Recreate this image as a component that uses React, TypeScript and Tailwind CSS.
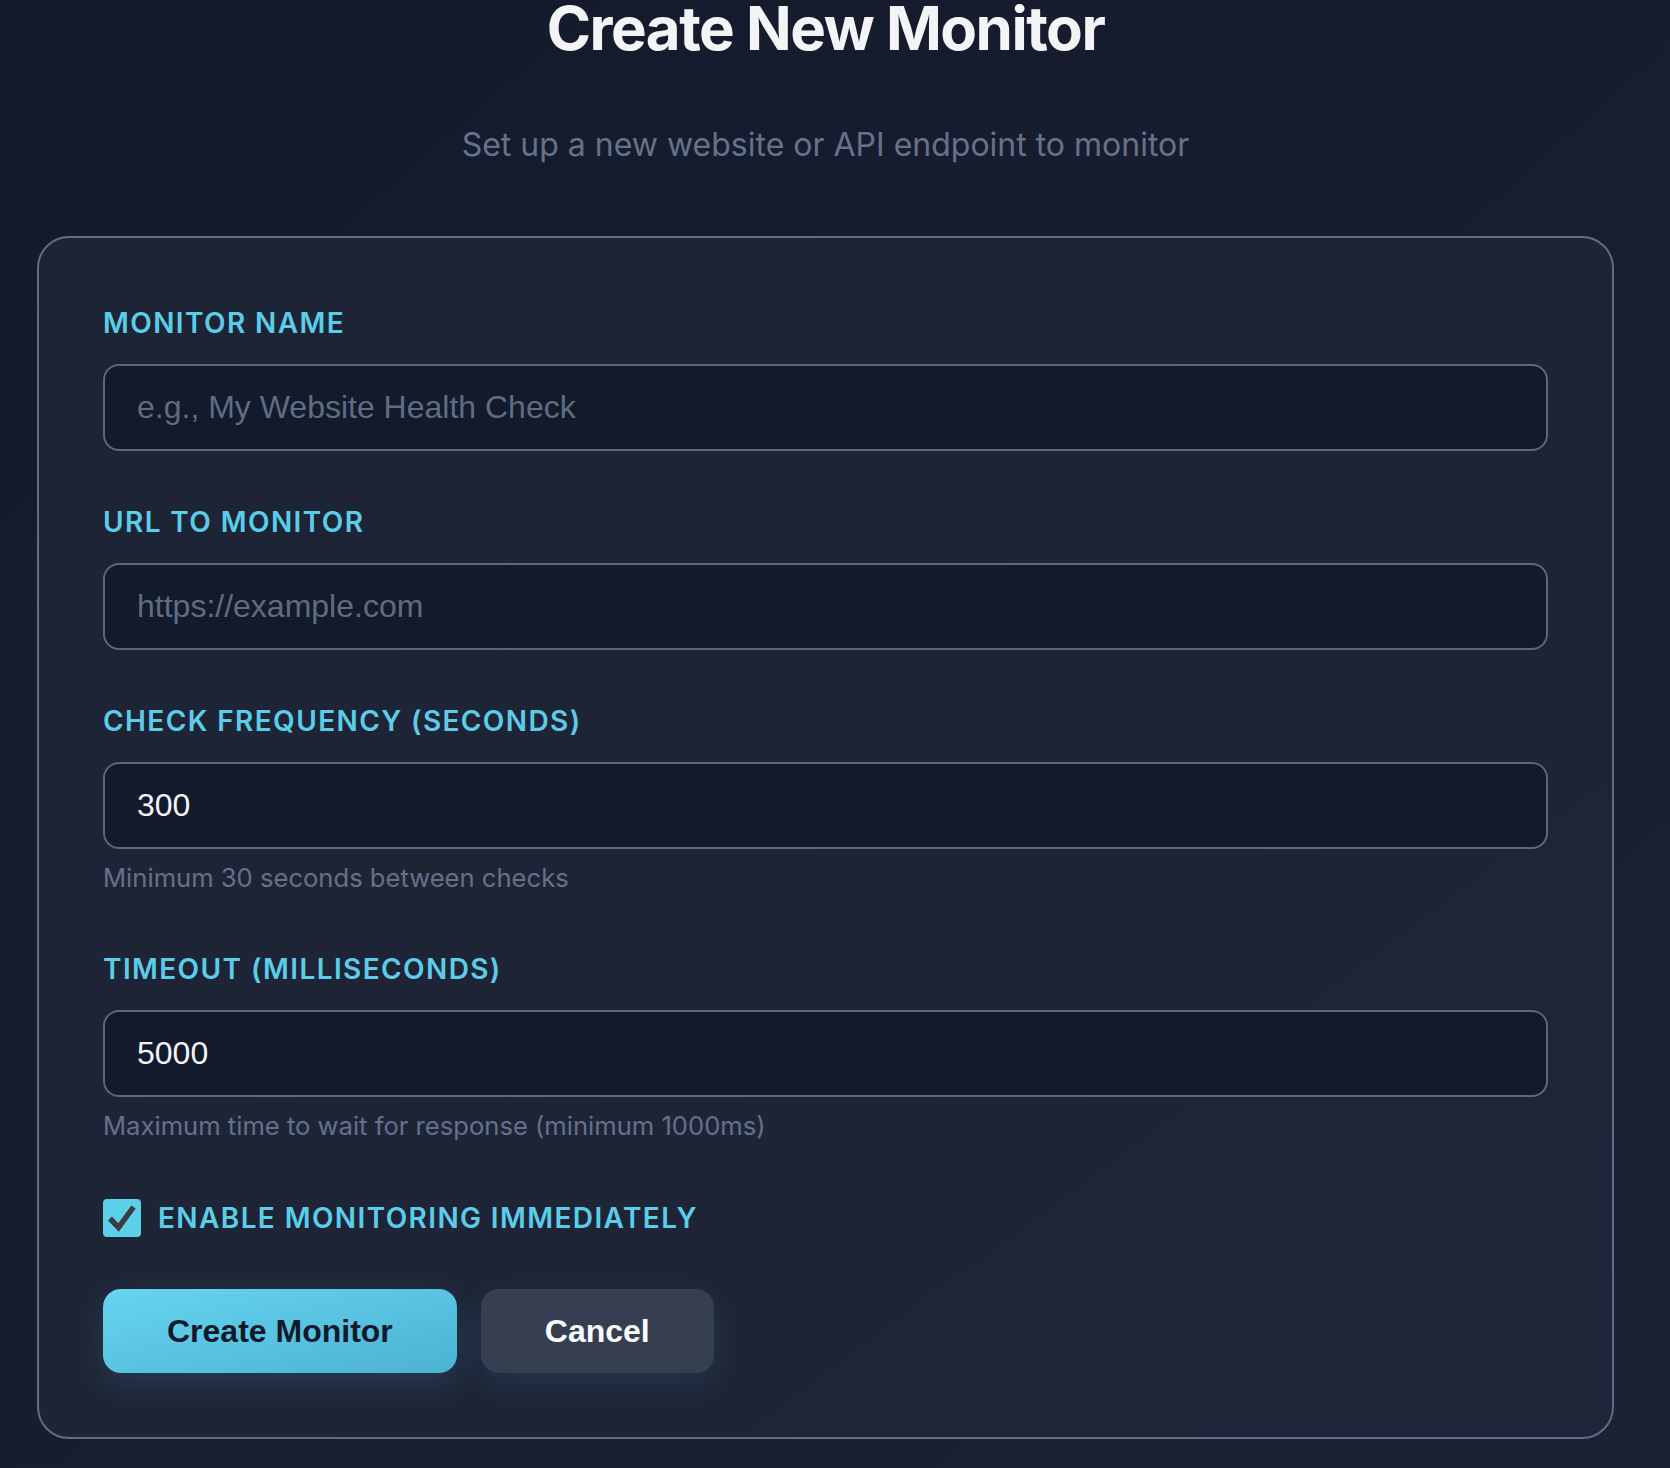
import { ReactNode } from "react";

const labelCls =
  "block font-['Inter',sans-serif] text-[28px] leading-[42px] font-semibold tracking-wider uppercase text-[#5ccde8]";

const inputCls =
  "block w-full h-[87px] px-[32px] rounded-[16px] border-2 border-[#5a677e] bg-[#131a2b] font-['Liberation_Sans',Arial,sans-serif] text-[32px] text-[#f1f5f9] placeholder:text-[#5f6c82] outline-none";

const hintCls =
  "mt-[9px] font-['Inter',sans-serif] text-[25.6px] leading-[40px] text-[#64718a]";

interface FieldProps {
  label: string;
  placeholder?: string;
  value?: string;
  hint?: string;
  className?: string;
}

const Field = ({ label, placeholder, value, hint, className }: FieldProps) => {
  return (
    <div className={className}>
      <label className={labelCls}>{label}</label>
      <input
        className={`${inputCls} mt-[20px]`}
        placeholder={placeholder}
        defaultValue={value}
      />
      {hint ? <p className={hintCls}>{hint}</p> : null}
    </div>
  );
};

const Checkbox = ({ children }: { children: ReactNode }) => {
  return (
    <div className="flex items-center gap-[17px] h-[42px]">
      <span className="flex items-center justify-center w-[38px] h-[38px] rounded-[4px] bg-[#5ccfe9]">
        <svg width="38" height="38" viewBox="0 0 38 38">
          <path
            d="M7 19.5 L15.5 28.5 L30.5 8"
            fill="none"
            stroke="#3a3c40"
            strokeWidth="5.5"
            strokeLinejoin="miter"
          />
        </svg>
      </span>
      <span className={labelCls}>{children}</span>
    </div>
  );
};

export default function App() {
  return (
    <div className="min-h-screen w-full overflow-hidden bg-linear-to-br from-[#131a2b] to-[#1c2134]">
      <div className="ml-[37px] w-[1577px]">
        <h1 className="-mt-[2px] text-center font-['Inter',sans-serif] text-[60px] leading-[60px] font-bold tracking-tight text-[#f3f4f6]">
          Create New Monitor
        </h1>
        <p className="mt-[63px] text-center font-['Inter',sans-serif] text-[32px] leading-[48px] text-[#64728a]">
          Set up a new website or API endpoint to monitor
        </p>

        <form
          className="mt-[67px] rounded-[32px] border-2 border-[#606d85] bg-linear-to-br from-[#1d2435] to-[#1f2538] p-[64px]"
          onSubmit={(e) => e.preventDefault()}
        >
          <Field label="Monitor Name" placeholder="e.g., My Website Health Check" />
          <Field className="mt-[50px]" label="URL to Monitor" placeholder="https://example.com" />
          <Field
            className="mt-[50px]"
            label="Check Frequency (seconds)"
            value="300"
            hint="Minimum 30 seconds between checks"
          />
          <Field
            className="mt-[50px]"
            label="Timeout (milliseconds)"
            value="5000"
            hint="Maximum time to wait for response (minimum 1000ms)"
          />

          <div className="mt-[51px]">
            <Checkbox>Enable Monitoring Immediately</Checkbox>
          </div>

          <div className="mt-[50px] flex gap-[24px]">
            <button
              type="submit"
              className="px-[64px] py-[24px] rounded-[18px] bg-linear-to-br from-[#66d5f0] to-[#4cb2d2] font-['Liberation_Sans',Arial,sans-serif] text-[32px] leading-[36px] font-bold text-[#111a2c] shadow-[0_10px_34px_rgba(92,205,232,0.14)]"
            >
              Create Monitor
            </button>
            <button
              type="button"
              className="px-[64px] py-[24px] rounded-[18px] bg-[#363f52] font-['Liberation_Sans',Arial,sans-serif] text-[32px] leading-[36px] font-bold text-[#f8fafc] shadow-[0_10px_34px_rgba(92,205,232,0.1)]"
            >
              Cancel
            </button>
          </div>
        </form>
      </div>
    </div>
  );
}
